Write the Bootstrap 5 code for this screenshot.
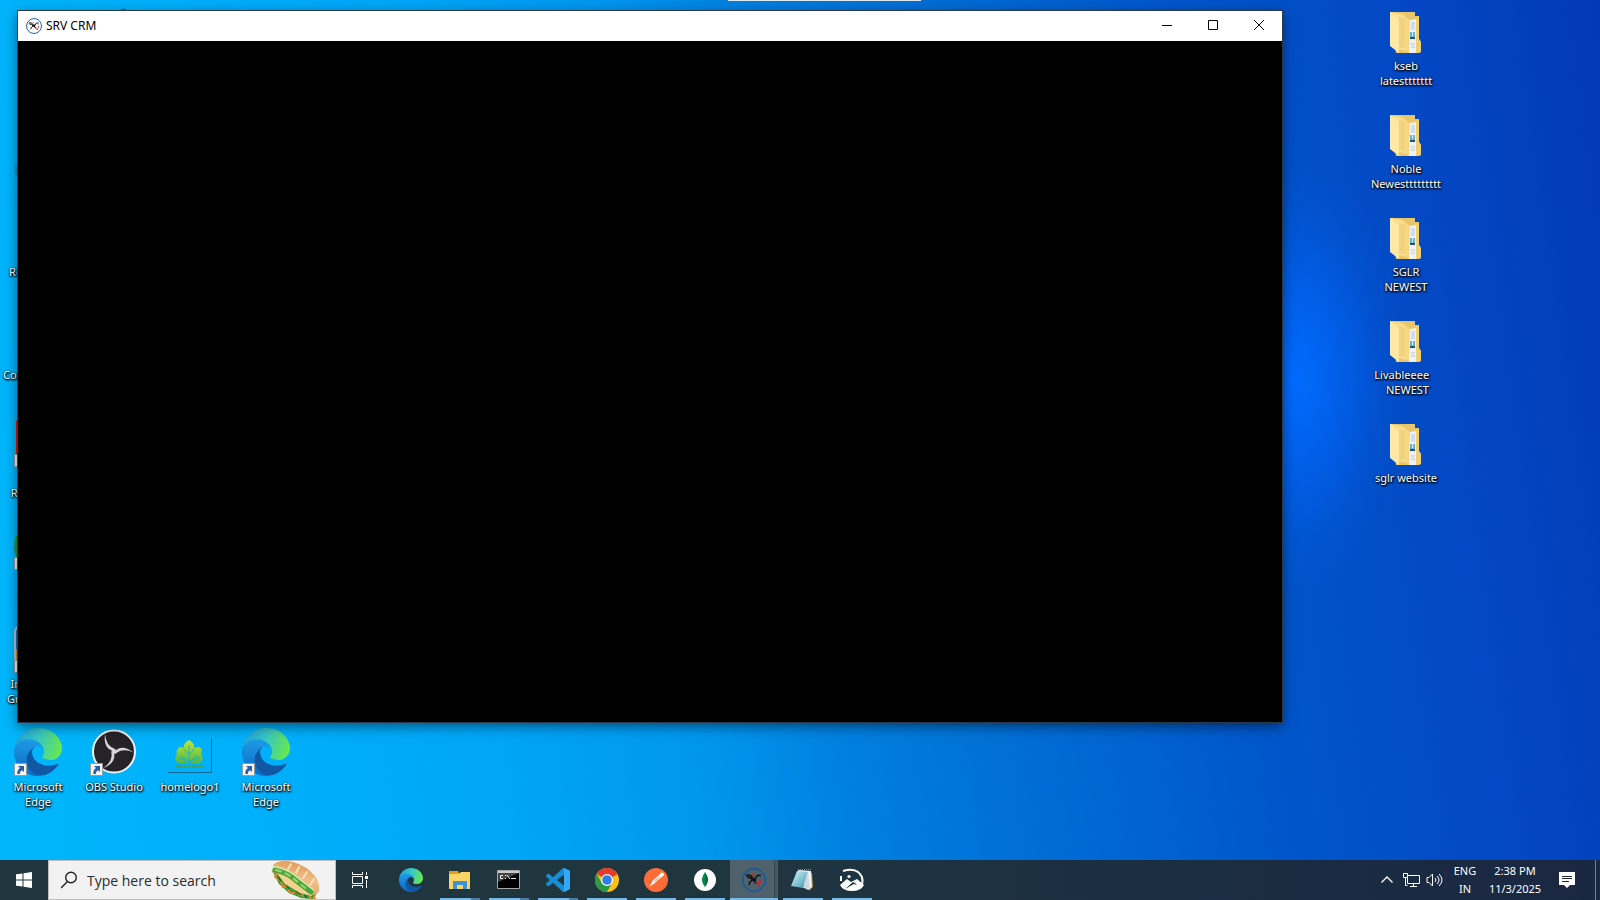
<!DOCTYPE html>
<html lang="en">
<head>
<meta charset="utf-8">
<meta name="viewport" content="width=device-width, initial-scale=1">
<title>Desktop</title>
<link href="https://cdn.jsdelivr.net/npm/bootstrap@5.3.0/dist/css/bootstrap.min.css" rel="stylesheet">
<style>
  body { font-family: "Noto Sans", "Open Sans", sans-serif; font-size: 11px; line-height: 15px; cursor: default; }
  svg { display: block; flex: none; }
  button { color: inherit; }
  .wallpaper {
    background:
      radial-gradient(ellipse 110px 220px at 81% 42%, #006cff 0%, #0068fcaa 35%, #0060f033 75%, #0060f000 100%),
      linear-gradient(82deg, #00b6fa 0%, #00b0fa 15%, #00a6f8 30%, #0096ee 42%, #0080e0 50%, #0070d6 59%, #0056ca 75%, #0448c4 88%, #0339b4 100%);
  }
  .icon-grid { display: grid; grid-template-columns: repeat(auto-fill, 76px); grid-auto-rows: 103px; padding-top: 7px; }
  .shortcut { row-gap: 3px; font-size: 11px; line-height: 15px; color: #fff; text-shadow: 1px 1px 2px #000, 0 1px 2px #000, 0 0 2px #0008; white-space: pre; }
  .shortcut:hover { color: #fff; background: #ffffff22; }
  .app-window { inset: 11px 318px 138px 18px; outline: 1px solid #2b3a48; box-shadow: 0 4px 12px #0008; }
  .titlebar { height: 30px; font-size: 12px; line-height: 14px; }
  .caption-btn { width: 46px; height: 28px; }
  .edge-lines { width: 2px; right: 317px; top: 320px; height: 296px; background: linear-gradient(#138a9e 0 49%, transparent 49% 51%, #138a9e 51%); }
  .top-strip { left: 728px; width: 193px; height: 1px; background: #dfe9f2; }
  .taskbar { height: 40px; background: linear-gradient(90deg, #20363f 0%, #20363f 45%, #1c3042 65%, #1a2741 100%); }
  .search-box { width: 288px; background: #f2f2f2; border: 1px solid #bdbdbd; }
  .search-box input { font-family: "Open Sans", sans-serif; font-size: 14px; color: #222; }
  .search-box input::placeholder { color: #2b2b2b; opacity: 1; }
  .task-list { column-gap: 1px; margin-left: 3px; }
  .task { width: 48px; height: 40px; }
  .task.running::after { content: ""; position: absolute; left: 4px; right: 4px; bottom: 0; height: 2px; background: #76b9ed; }
  .task.stacked::after { background: linear-gradient(90deg, #76b9ed 31px, #4d7ea6 31px); }
  .task.current { background: linear-gradient(90deg, #4f626b 44px, #33474f 44px 45px, #47595f 45px); }
  .task.current::after { left: 0; right: 0; }
  .tray-btn { width: 24px; height: 40px; }
  .tray-text { font-size: 11px; line-height: 18px; }
  .lang { width: 36px; }
  .clock { width: 64px; }
  .notice { width: 40px; }
  .peek { width: 5px; border-left: 1px solid #77808f !important; }
</style>
</head>
<body class="vh-100 d-flex flex-column overflow-hidden wallpaper">

<svg width="0" height="0" class="position-absolute" aria-hidden="true">
  <defs>
    <linearGradient id="eg" x1="0" y1=".3" x2="1" y2=".5"><stop offset="0" stop-color="#1e9fde"/><stop offset=".5" stop-color="#38c8c4"/><stop offset="1" stop-color="#66e84e"/></linearGradient>
    <linearGradient id="eb" x1=".5" y1="0" x2=".4" y2="1"><stop offset="0" stop-color="#1f9fe6"/><stop offset="1" stop-color="#0a6ac4"/></linearGradient>
    <linearGradient id="fd" x1="0" y1="0" x2="1" y2="0"><stop offset="0" stop-color="#fbe293"/><stop offset="1" stop-color="#f4d67e"/></linearGradient>
    <linearGradient id="bn" x1=".7" y1="0" x2=".4" y2="1"><stop offset="0" stop-color="#dd9450"/><stop offset=".5" stop-color="#f0bf88"/><stop offset="1" stop-color="#e0a566"/></linearGradient>
    <linearGradient id="np" x1="0" y1="0" x2="1" y2="1"><stop offset="0" stop-color="#d8f3fa"/><stop offset="1" stop-color="#3b98b3"/></linearGradient>
    <linearGradient id="lf" x1="0" y1="0" x2="0" y2="1"><stop offset="0" stop-color="#c0e636"/><stop offset="1" stop-color="#4cb84c"/></linearGradient>
  </defs>
  <symbol id="edge" viewBox="0 0 256 256">
    <path fill="#1058a4" d="M231 190.5c-3.4 1.8-6.9 3.4-10.5 4.7-11.5 4.3-23.6 6.5-35.9 6.5-47.3 0-88.5-32.5-88.5-74.3 0-11.4 6.4-21.9 16.4-27.3-42.8 1.8-53.8 46.4-53.8 72.5 0 74 68.1 81.4 82.8 81.4 7.9 0 19.8-2.3 27-4.6l1.3-.4c27.6-9.5 51-28.1 66.6-52.8 1.2-1.9.6-4.3-1.2-5.5-1.3-.8-2.9-.9-4.2-.2z"/>
    <path fill="url(#eb)" d="M105.7 241.4c-8.9-5.5-16.6-12.8-22.7-21.3-26.3-36-18.4-86.5 17.6-112.8 3.8-2.7 7.7-5.2 11.9-7.2 3.1-1.5 8.4-4.1 15.5-4 10.1.1 19.6 4.9 25.7 13 4 5.4 6.3 11.9 6.4 18.7 0-.2 24.5-79.6-80-79.6-43.9 0-80 41.7-80 78.2-.2 19.3 4 38.5 12.1 56 27.6 58.8 94.8 87.6 156.4 67.1-21.1 6.6-44.1 3.7-62.9-8.1z"/>
    <path fill="url(#eg)" d="M152.3 148.9c-.9 1-3.4 2.5-3.4 5.6 0 2.6 1.7 5.2 4.8 7.3 14.4 10 41.4 8.7 41.5 8.7 10.7 0 21.1-2.9 30.3-8.3 18.8-11 30.4-31.1 30.4-52.9.3-22.4-8-37.3-11.3-43.9C223.5 23.9 177.7 0 128 0 58 0 1 56.2 0 126.2c.5-36.5 36.8-66 80-66 3.500 0 23.500.3 42 10.1 16.300 8.600 24.900 18.900 30.800 29.200 6.200 10.700 7.300 24.100 7.300 29.500 0 5.300-2.700 13.300-7.800 19.900z"/>
  </symbol>
  <symbol id="arrow" viewBox="0 0 13 13">
    <path fill="#f4f4f4" stroke="#9a9a9a" d="M.5.5h12v12H.5z"/>
    <path fill="#2a5ca8" d="M4 3h6v6L8 7.300Q5.600 8.500 5.800 11H3.400Q2.600 7.500 6 5z"/>
  </symbol>
  <symbol id="folder" viewBox="0 0 48 48">
    <path fill="#e9c66c" d="M8 5h25v4h4v23l2 3v10l-3 1H14z"/>
    <path fill="#f8dc86" d="M8 5l12 2 8 6v31l-11-3z"/>
    <path fill="#eef1f5" d="M28 13l6-1v34h-7z"/>
    <path stroke="#a9c9e6" d="M29 16h4M29 18h4M29 20h4M29 22h4M29 37h4M29 40h4"/>
    <path fill="#67b1d6" d="M28 25h5v6h-5z"/><path fill="#20567c" d="M28 30h5v2h-5z"/><path fill="#d4ecf5" d="M30 25h1v4h-1z"/>
    <path fill="#f0cf73" d="M34 12l3-3v23l2 3v10l-3 1h-2z"/>
    <path fill="url(#fd)" d="M15 7l12 5v33l-10-3z"/>
    <path fill="#fee8a5" d="M8 5l9 7v34l-9-7z"/>
    <path fill="#efd07a" d="M17 10l6 2v28l-6 1z" opacity=".8"/>
  </symbol>
  <symbol id="srv" viewBox="0 0 24 24">
    <circle cx="12" cy="12" r="11.200" fill="none" stroke="#1558a0" stroke-width="1.400"/>
    <path fill="none" stroke="#111" stroke-width="1.500" d="M4 7.500q5-2 7 3.500h2q2-5 6-3.500M5 9q4 0 5.500 3L8 14l-1 3M13 12q-2 2 2 3"/>
    <path fill="#111" d="M10 10h4v3h-4z"/>
    <path fill="none" stroke="#d02020" stroke-width="1.200" d="M10 6l2 2M14 14l3 4 2-6M18 9v1"/>
  </symbol>
</svg>

<main class="position-relative flex-grow-1">
  <nav class="icon-grid h-100" aria-label="Desktop icons">
    <a href="#" class="shortcut d-flex flex-column align-items-center text-decoration-none text-center" style="grid-area:1/2" aria-label="Shortcut"><svg width="48" height="48"><path fill="#3a6a85" d="M30 4l3-3 5 3v30H30z"/></svg></a>
    <a href="#" class="shortcut d-flex flex-column align-items-center text-decoration-none text-center" style="grid-area:2/1"><svg width="48" height="48"></svg>Network</a>
    <a href="#" class="shortcut d-flex flex-column align-items-center text-decoration-none text-center" style="grid-area:3/1"><svg width="48" height="48"></svg>Recycle Bin</a>
    <a href="#" class="shortcut d-flex flex-column align-items-center text-decoration-none text-center" style="grid-area:4/1"><svg width="48" height="48"></svg>Control Panel</a>
    <a href="#" class="shortcut d-flex flex-column align-items-center text-decoration-none text-center" style="grid-area:5/1"><svg width="48" height="48"><rect x="2" y="1" width="44" height="46" rx="2" fill="#e3160c"/><use href="#arrow" y="35" width="13" height="13"/></svg>Acrobat
Reader DC</a>
    <a href="#" class="shortcut d-flex flex-column align-items-center text-decoration-none text-center" style="grid-area:6/1"><svg width="48" height="48"><circle cx="24" cy="24" r="24" fill="#2b9348"/><use href="#arrow" y="35" width="13" height="13"/></svg>Google
Chrome</a>
    <a href="#" class="shortcut d-flex flex-column align-items-center text-decoration-none text-center" style="grid-area:7/1"><svg width="48" height="48"><rect x="1" y="1" width="46" height="46" rx="6" fill="#1c6fae" stroke="#b9c2c9" stroke-width="2"/><path fill="#c2973a" d="M2 24h40v14H2z"/><use href="#arrow" y="35" width="13" height="13"/></svg>Integrated
Graphics Co</a>

    <a href="#" class="shortcut d-flex flex-column align-items-center text-decoration-none text-center" style="grid-area:8/1"><svg width="48" height="48"><use href="#edge" width="48" height="48"/><use href="#arrow" y="35" width="13" height="13"/></svg>Microsoft
Edge</a>
    <a href="#" class="shortcut d-flex flex-column align-items-center text-decoration-none text-center" style="grid-area:8/2"><svg width="48" height="48">
      <circle cx="24" cy="23.500" r="21" fill="#252327" stroke="#f1f1f1" stroke-width="2"/>
      <g id="blade" fill="#d6d4d6"><path d="M24 23Q13 21 15 6q1 12 10 15z"/></g>
      <use href="#blade" transform="rotate(120 24 23.500)"/><use href="#blade" transform="rotate(240 24 23.500)"/>
      <circle cx="24" cy="23.500" r="2.500" fill="#d6d4d6"/>
      <use href="#arrow" y="35" width="13" height="13"/></svg>OBS Studio</a>
    <a href="#" class="shortcut d-flex flex-column align-items-center text-decoration-none text-center" style="grid-area:8/3"><svg width="48" height="48">
      <path fill="none" stroke="#06699c" d="M45.500 10v34.500H2"/>
      <path fill="url(#lf)" d="M23 12q6 3 5 8 6-3 8 2-1 3-1 4 4 5-1 9-5 2-11-1-6 3-11 1-5-4-1-9-1-1 0-4 2-5 7-2-1-5 5-8z"/>
      <path fill="none" stroke="#1fb3c4" d="M23 17v17M23 27l-5-6M23 27l5-6M23 34l-8-6M23 34l8-6M12 29l11 5 11-5"/>
      <path stroke="#3c9f62" stroke-width="2" stroke-dasharray="3 1" d="M10 38.500h27"/></svg>homelogo1</a>
    <a href="#" class="shortcut d-flex flex-column align-items-center text-decoration-none text-center" style="grid-area:8/4"><svg width="48" height="48"><use href="#edge" width="48" height="48"/><use href="#arrow" y="35" width="13" height="13"/></svg>Microsoft
Edge</a>

    <a href="#" class="shortcut d-flex flex-column align-items-center text-decoration-none text-center" style="grid-area:1/19"><svg width="48" height="48"><use href="#folder"/></svg>kseb
latesttttttt</a>
    <a href="#" class="shortcut d-flex flex-column align-items-center text-decoration-none text-center" style="grid-area:2/19"><svg width="48" height="48"><use href="#folder"/></svg>Noble
Newesttttttttt</a>
    <a href="#" class="shortcut d-flex flex-column align-items-center text-decoration-none text-center" style="grid-area:3/19"><svg width="48" height="48"><use href="#folder"/></svg>SGLR
NEWEST</a>
    <a href="#" class="shortcut d-flex flex-column align-items-center text-decoration-none text-center" style="grid-area:4/19"><svg width="48" height="48"><use href="#folder"/></svg>Livableeee   
 NEWEST</a>
    <a href="#" class="shortcut d-flex flex-column align-items-center text-decoration-none text-center" style="grid-area:5/19"><svg width="48" height="48"><use href="#folder"/></svg>sglr website</a>
  </nav>

  <div class="edge-lines position-absolute"></div>
  <div class="top-strip position-absolute top-0"></div>

  <section class="app-window position-absolute d-flex flex-column bg-black" aria-label="SRV CRM">
    <header class="titlebar d-flex align-items-start bg-white text-black">
      <div class="d-flex align-items-center gap-1 ps-2 h-100 flex-grow-1"><svg width="16" height="16"><use href="#srv"/></svg><span>SRV CRM</span></div>
      <button class="caption-btn btn p-0 border-0 rounded-0 d-flex align-items-center justify-content-center" aria-label="Minimize"><svg width="10" height="10" stroke="#000"><path d="M0 5.500h10"/></svg></button>
      <button class="caption-btn btn p-0 border-0 rounded-0 d-flex align-items-center justify-content-center" aria-label="Maximize"><svg width="10" height="10" stroke="#000" fill="none"><path d="M.5.5h9v9h-9z"/></svg></button>
      <button class="caption-btn btn p-0 border-0 rounded-0 d-flex align-items-center justify-content-center" aria-label="Close"><svg width="10" height="10" stroke="#000"><path d="M0 0l10 10M10 0L0 10"/></svg></button>
    </header>
  </section>
</main>

<footer class="taskbar d-flex text-white">
  <button class="task btn p-0 border-0 rounded-0 d-flex align-items-center justify-content-center" aria-label="Start"><svg width="16" height="16" fill="#fff"><path d="M0 2.300L6.500 1.400v6.100H0zM7.500 1.200L16 0v7.500H7.500zM0 8.500h6.500v6.100L0 13.700zM7.500 8.500H16V16l-8.500-1.200z"/></svg></button>
  <label class="search-box d-flex align-items-center ps-2 overflow-hidden">
    <svg class="ms-1" width="18" height="18" fill="none" stroke="#222" stroke-width="1.400"><path d="M6.500 10.500L0 17"/><circle cx="10" cy="6.500" r="5.300"/></svg>
    <input type="text" class="form-control border-0 bg-transparent shadow-none p-0 ms-2" placeholder="Type here to search" aria-label="Search">
    <svg class="me-3" width="50" height="38" viewBox="-2 0 50 38">
      <path fill="#3d9a3a" d="M2 11l6 12 10 9 12 5 12 1 4-6L12 8z"/>
      <path fill="none" stroke="#e8832a" stroke-width="2" d="M1 10l5 2-2 4 6 4M10 21l2 5 4-1M17 27l2 5 5 0M27 33l6 2M38 33l2 5M43 35l1 3"/>
      <path fill="none" stroke="#1f6b2c" stroke-width="1.500" d="M7 16l3 4M15 23l3 5M25 30l5 4M33 34l3 3"/>
      <path fill="#f4d18c" d="M6 12l8 11 15 9 12 3 1-4L12 11z"/>
      <path fill="url(#bn)" d="M2 4Q8-2 22 1q14 4 22 14 6 9 4 15-2 4-6 4Q34 21 23 14 12 8 3 8z"/>
      <path fill="none" stroke="#d9f0b4" stroke-width="6" stroke-linecap="round" d="M4 8q12 3 18 8t18 14"/>
      <path fill="none" stroke="#4aa63c" stroke-width="5" stroke-linecap="round" d="M4 9q12 3 18 8t18 14"/>
      <path fill="none" stroke="#9bd56c" stroke-width="2" stroke-linecap="round" stroke-dasharray="5 5" d="M5 9q11 3 17 8t16 13"/>
      <path fill="none" stroke="#fae0b8" stroke-width="2" stroke-linecap="round" d="M20 3l-3 5M28 6l-3 6M36 11l-4 6M43 18l-4 6"/>
    </svg>
  </label>
  <button class="task btn p-0 border-0 rounded-0 d-flex align-items-center justify-content-center" aria-label="Task View"><svg width="16" height="16" fill="none" stroke="#fff"><path d="M.5 0v2.500h10V0M.5 4.500h10v7H.5zM.5 16v-2.500h10V16M14.500 0v3M14.500 8v8"/><path fill="#fff" stroke="none" d="M13 4h3v3h-3z"/></svg></button>

  <nav class="task-list d-flex" aria-label="Open applications">
    <button class="task btn p-0 border-0 rounded-0 d-flex align-items-center justify-content-center position-relative" aria-label="Microsoft Edge"><svg width="24" height="24"><use href="#edge"/></svg></button>
    <button class="task running stacked btn p-0 border-0 rounded-0 d-flex align-items-center justify-content-center position-relative" aria-label="File Explorer"><svg width="24" height="24">
      <path fill="#e2a21b" d="M1 3h9l1 2h11v2H1z"/><path fill="#fbd667" d="M1 6h10l2-2h9v17H1z"/><path fill="#3d93d4" d="M5 13h14v8h-4v-4H9v4H5z"/></svg></button>
    <button class="task running stacked btn p-0 border-0 rounded-0 d-flex align-items-center justify-content-center position-relative" aria-label="Command Prompt"><svg width="24" height="24">
      <path fill="#000" stroke="#a6a6a6" d="M.5 2.500h22v18H.5z"/><path fill="#c4ccd0" d="M1 3h21v2H1z"/><path fill="#444" d="M1 5h21L1 14z"/><path fill="none" stroke="#eee" d="M6 7.500H3.500v3H6M8.500 7v1M8.500 10v1M10 7l3 4M14 10.500h5"/></svg></button>
    <button class="task running stacked btn p-0 border-0 rounded-0 d-flex align-items-center justify-content-center position-relative" aria-label="Visual Studio Code"><svg width="24" height="24">
      <path fill="#178fd6" d="M23.150 2.587L18.210.210a1.494 1.494 0 0 0-1.705.290l-9.460 8.630-4.120-3.128a.999.999 0 0 0-1.276.057L.327 7.261A1 1 0 0 0 .326 8.740L3.899 12 .326 15.260a1 1 0 0 0 .001 1.479L1.650 17.940a.999.999 0 0 0 1.276.057l4.120-3.128 9.460 8.630a1.492 1.492 0 0 0 1.704.290l4.942-2.377A1.500 1.500 0 0 0 24 20.060V3.939a1.500 1.500 0 0 0-.850-1.352zm-5.146 14.861L10.826 12l7.178-5.448v10.896z"/><path fill="#35aaf2" d="M18 0l5.150 2.587Q24 3 24 4v16q0 1-.85 1.400L18 24z"/></svg></button>
    <button class="task running btn p-0 border-0 rounded-0 d-flex align-items-center justify-content-center position-relative" aria-label="Google Chrome"><svg width="24" height="24">
      <circle cx="12" cy="12" r="12" fill="#fbc116"/><path fill="#e33b2e" d="M1.600 6A12 12 0 0 1 22.400 6L12 12z"/><path fill="#e33b2e" d="M12 6h10.400L12 12z"/><path fill="#269a46" d="M1.600 6L6.800 15 12 18l5-3-5 9A12 12 0 0 1 1.600 6z"/><circle cx="12" cy="12" r="6" fill="#fff"/><circle cx="12" cy="12" r="4.800" fill="#2f7de9"/></svg></button>
    <button class="task running btn p-0 border-0 rounded-0 d-flex align-items-center justify-content-center position-relative" aria-label="Postman"><svg width="24" height="24">
      <circle cx="12" cy="12" r="12" fill="#ff6c37"/><path fill="none" stroke="#fff" stroke-width="3" stroke-linecap="round" d="M9.500 14l7-6"/><circle cx="18" cy="6.500" r="2" fill="#fff"/><path fill="#fff" d="M5 19l4-6 2 2z"/><path stroke="#f79b77" d="M10 14l6-5M12 11l2 2"/></svg></button>
    <button class="task running btn p-0 border-0 rounded-0 d-flex align-items-center justify-content-center position-relative" aria-label="MongoDB Compass"><svg width="24" height="24">
      <circle cx="12" cy="12" r="11" fill="#fff"/><path fill="#0a8a50" d="M12 4q-5 7-2 12l2 3z"/><path fill="#17633f" d="M12 4q5 7 2 12l-2 3z"/></svg></button>
    <button class="task running current btn p-0 border-0 rounded-0 d-flex align-items-center justify-content-center position-relative" aria-label="SRV CRM"><svg width="24" height="24"><use href="#srv"/></svg></button>
    <button class="task running btn p-0 border-0 rounded-0 d-flex align-items-center justify-content-center position-relative" aria-label="Notepad"><svg width="24" height="24">
      <path fill="#b58a4b" d="M18 4l3 1 1 14-4 4z"/><path fill="#edf1f2" d="M7 2l13 1 1 16-4 3-3-2z"/><path fill="url(#np)" d="M6 3l11 1-5 16-12-2z"/><path fill="#cfd9dc" d="M12 20l5-16 2 17z"/><path stroke="#8a9699" stroke-dasharray="1 1" d="M7 1.500h13"/></svg></button>
    <button class="task running btn p-0 border-0 rounded-0 d-flex align-items-center justify-content-center position-relative" aria-label="Photos"><svg width="24" height="24">
      <path fill="none" stroke="#fff" stroke-width="2" d="M3 3q10-3 15 1 6 5 4 12M1 8v5"/><circle cx="9" cy="8.500" r="1.600" fill="#fff"/><path fill="#fff" d="M0 17l7-6 4 3 6-3 7 6q-3 6-12 6-9 0-12-6z"/><path fill="#20363f" d="M5 21l8-7 2 1 2 2-3-1z"/></svg></button>
  </nav>

  <div class="d-flex ms-auto align-items-center" aria-label="Notification area">
    <button class="tray-btn btn p-0 border-0 rounded-0 d-flex align-items-center justify-content-center" aria-label="Show hidden icons"><svg width="12" height="8" fill="none" stroke="#fff" stroke-width="1.300"><path d="M.5 6.500L6 1l5.500 5.500"/></svg></button>
    <button class="tray-btn btn p-0 border-0 rounded-0 d-flex align-items-center justify-content-center" aria-label="Network"><svg width="17" height="16" fill="none" stroke="#fff"><path d="M5 3.500h11.500v8H4.500V6M.5 1.500h4v4h-4zM2.500 5.500v8h2M10.500 12v2.500M7 14.500h7"/></svg></button>
    <button class="tray-btn btn p-0 border-0 rounded-0 d-flex align-items-center justify-content-center" aria-label="Volume"><svg width="18" height="16" fill="none" stroke="#fff"><path d="M1 5.500h2L6.500 2v12L3 10.500H1zM9 6q2 2 0 4M11 4q4 4 0 8M13 2q6 6 0 12"/></svg></button>
    <button class="tray-text lang btn p-0 border-0 rounded-0 text-white">ENG<br>IN</button>
    <button class="tray-text clock btn p-0 border-0 rounded-0 text-white text-nowrap">2:38 PM<br>11/3/2025</button>
    <button class="notice btn p-0 border-0 rounded-0 d-flex align-items-center justify-content-center me-2" aria-label="Notifications"><svg width="16" height="16"><path fill="#fff" d="M0 0h16v13h-5l-3 3-3-3H0z"/><path stroke="#1a2741" d="M3 4.500h10M3 6.500h10M3 9.500h7"/></svg></button>
    <button class="peek btn p-0 border-0 rounded-0 align-self-stretch" aria-label="Show desktop"></button>
  </div>
</footer>
<script src="https://cdn.jsdelivr.net/npm/bootstrap@5.3.0/dist/js/bootstrap.bundle.min.js"></script>
</body>
</html>
